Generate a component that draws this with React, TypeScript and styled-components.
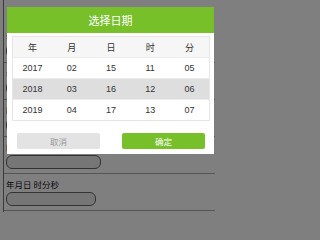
import React from "react";
import styled, { createGlobalStyle } from "styled-components";

const Global = createGlobalStyle`
  html, body { margin: 0; padding: 0; background: #fff; }
  body { font-family: "Liberation Sans", "Noto Sans CJK SC", sans-serif; overflow: hidden; }
`;

const Page = styled.div`
  padding: 26px 0 0 0;
  border-left: 1px solid #777;
  margin-left: 3px;
  width: 212px;
  height: 212px;
  box-sizing: border-box;
`;

const Field = styled.div`
  padding: 4px 0 4px 2px;
  border-bottom: 1px solid #aaa;
  display: flex;
  flex-direction: column;
  gap: 1px;
`;

const Label = styled.div`
  height: 13px;
  line-height: 13px;
  font-size: 8.5px;
  color: #111;
  font-family: "Noto Sans CJK SC", sans-serif;
`;

const Input = styled.div<{ $w: number }>`
  width: ${(p) => p.$w}px;
  height: 14px;
  box-sizing: border-box;
  border: 1px solid #666;
  border-radius: 6px;
  background: #ececec;
`;

const Overlay = styled.div`
  position: fixed;
  inset: 0;
  background: rgba(0, 0, 0, 0.5);
`;

const Modal = styled.div`
  position: fixed;
  top: 7px;
  left: 7px;
  width: 207px;
  height: 147px;
  background: #fff;
  display: flex;
  flex-direction: column;
`;

const Header = styled.div`
  height: 26px;
  background: #77c02a;
  color: #fff;
  font-family: "Noto Sans CJK SC", sans-serif;
  font-size: 11px;
  display: flex;
  align-items: center;
  justify-content: center;
`;

const Table = styled.div`
  margin: 3px 4px 0 5px;
  border: 1px solid #e6e6e6;
  display: flex;
  flex-direction: column;
`;

const Row = styled.div<{ $bg: string }>`
  display: grid;
  grid-template-columns: repeat(5, 1fr);
  height: 20px;
  background: ${(p) => p.$bg};
  border-bottom: 1px solid #ececec;
  &:last-child { border-bottom: none; }
`;

const Cell = styled.div<{ $cjk?: boolean }>`
  display: flex;
  align-items: center;
  justify-content: center;
  font-size: 9px;
  font-family: ${(p) =>
    p.$cjk ? `"Noto Sans CJK SC", sans-serif` : `"Liberation Sans", sans-serif`};
  color: #333;
`;

const Buttons = styled.div`
  display: flex;
  justify-content: space-between;
  padding: 12px 9px 0 10px;
`;

const Button = styled.div<{ $primary?: boolean }>`
  width: 83px;
  height: 16px;
  border-radius: 2px;
  display: flex;
  align-items: center;
  justify-content: center;
  font-family: "Noto Sans CJK SC", sans-serif;
  font-size: 8.5px;
  background: ${(p) => (p.$primary ? "#77c02a" : "#e3e3e3")};
  color: ${(p) => (p.$primary ? "#fff" : "#999")};
`;

const rows = [
  ["2017", "02", "15", "11", "05"],
  ["2018", "03", "16", "12", "06"],
  ["2019", "04", "17", "13", "07"],
];

export default function App() {
  return (
    <>
      <Global />
      <Page>
        <Field>
          <Label>年月日</Label>
          <Input $w={95} />
        </Field>
        <Field>
          <Label>年月</Label>
          <Input $w={95} />
        </Field>
        <Field>
          <Label>时分</Label>
          <Input $w={95} />
        </Field>
        <Field>
          <Label>时间</Label>
          <Input $w={95} />
        </Field>
        <Field>
          <Label>年月日 时分秒</Label>
          <Input $w={90} />
        </Field>
      </Page>
      <Overlay />
      <Modal>
        <Header>选择日期</Header>
        <Table>
          <Row $bg="#f6f6f6">
            {["年", "月", "日", "时", "分"].map((t) => (
              <Cell key={t} $cjk>
                {t}
              </Cell>
            ))}
          </Row>
          {rows.map((r, i) => (
            <Row key={i} $bg={i === 1 ? "#dedede" : "#fff"}>
              {r.map((v, j) => (
                <Cell key={j}>{v}</Cell>
              ))}
            </Row>
          ))}
        </Table>
        <Buttons>
          <Button>取消</Button>
          <Button $primary>确定</Button>
        </Buttons>
      </Modal>
    </>
  );
}
